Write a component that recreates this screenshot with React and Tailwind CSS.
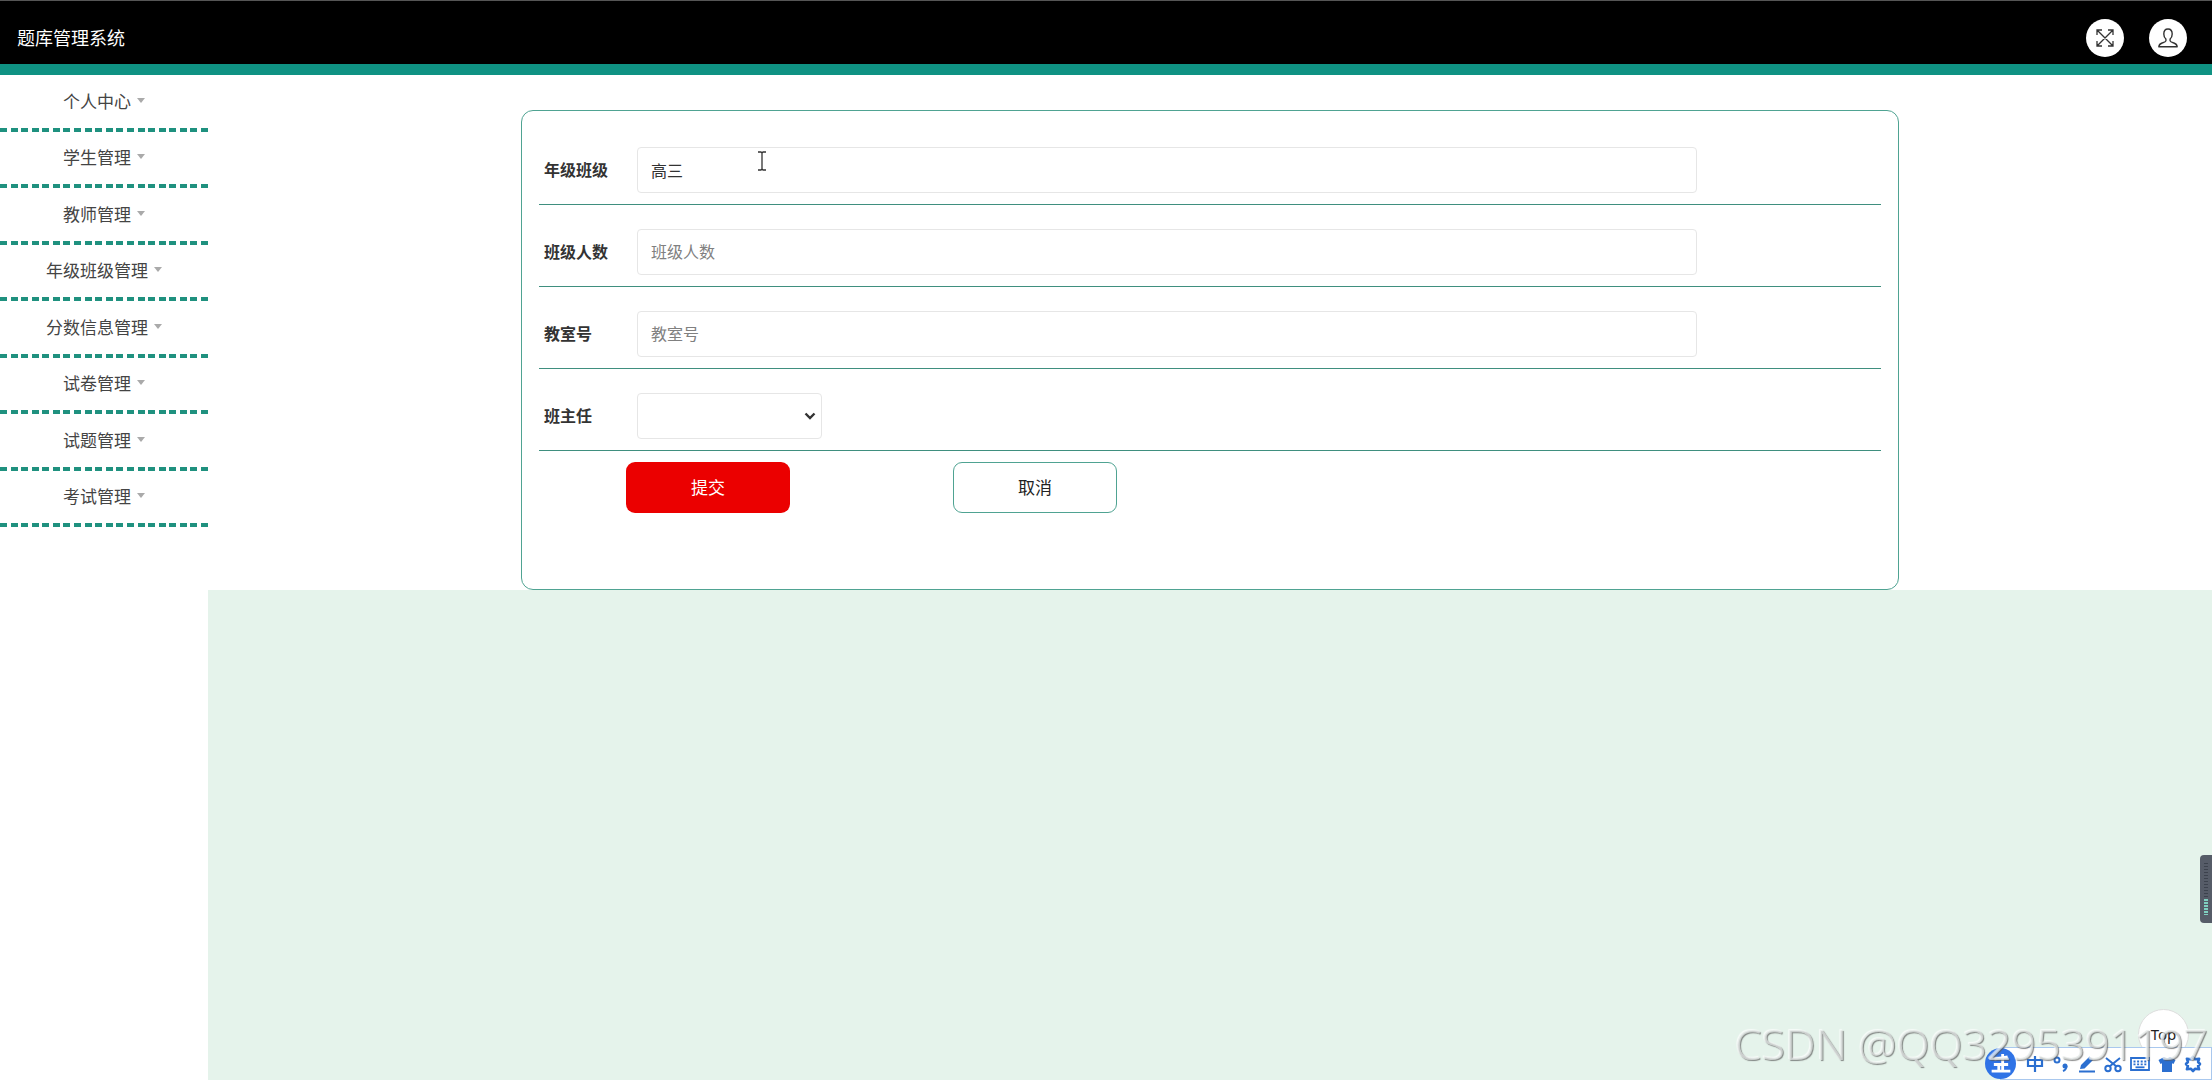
import { useState } from "react";

const menuItems = [
  "个人中心",
  "学生管理",
  "教师管理",
  "年级班级管理",
  "分数信息管理",
  "试卷管理",
  "试题管理",
  "考试管理",
];

const iconButton = "flex size-[38px] items-center justify-center rounded-full bg-white text-[#333]";
const control = "h-[46px] rounded-[4px] border border-[#e6e6e6] bg-white text-[16px] text-[#333] outline-none";

function Header() {
  return (
    <header className="flex h-[75px] items-center justify-between border-t border-b-[11px] border-t-[#555] border-b-[#0f9283] bg-black pt-[10px] pr-[25px] pl-[17px]">
      <h1 className="text-[18px] leading-6 text-white">题库管理系统</h1>
      <div className="flex gap-[25px]">
        <button type="button" aria-label="全屏" className={iconButton}>
          <svg viewBox="0 0 18 18" className="size-[18px]" fill="none" stroke="currentColor" strokeWidth="1.3">
            <path d="M1 1 17 17M17 1 1 17M1 6V1h5M12 1h5v5M17 12v5h-5M6 17H1v-5" />
          </svg>
        </button>
        <button type="button" aria-label="用户" className={iconButton}>
          <svg viewBox="0 0 20 20" className="size-5" fill="none" stroke="currentColor" strokeWidth="1.4" strokeLinejoin="round">
            <path d="M10 1C7.200 1 5.800 3.200 5.800 6c0 2.300.800 3.900 2.100 5v1.900c-.400 1.200-1.900 1.500-3.800 2.100-1.900.600-3 1.600-3.300 3.800h18.400c-.300-2.200-1.400-3.200-3.300-3.800-1.900-.600-3.400-.900-3.800-2.100V11c1.300-1.100 2.100-2.700 2.100-5 0-2.800-1.400-5-4.200-5Z" />
          </svg>
        </button>
      </div>
    </header>
  );
}

function Sidebar() {
  return (
    <nav className="w-[208px] shrink-0 bg-white">
      <ul className="grid h-[452px] auto-rows-fr">
        {menuItems.map((item) => (
          <li key={item} className="flex flex-col">
            <a href="#" className="flex flex-1 items-center justify-center gap-[6px] text-[17px] text-[#444]">
              {item}
              <span className="mb-[2px] border-x-4 border-t-[5px] border-x-transparent border-t-[#aaa]" />
            </a>
            <span className="h-[4px] bg-[repeating-linear-gradient(90deg,#1f917f_0_7px,transparent_7px_calc((100%_-_7px)/19))]" />
          </li>
        ))}
      </ul>
    </nav>
  );
}

function FormRow({ id, label, children }) {
  return (
    <div className="flex items-center border-b border-[#3f8f7f] pt-6 pr-[184px] pb-[11px] pl-[5px]">
      <label htmlFor={id} className="w-[93px] shrink-0 text-[16px] font-bold text-[#333]">
        {label}
      </label>
      {children}
    </div>
  );
}

function ClassForm() {
  const [form, setForm] = useState({ grade: "高三", count: "", room: "", teacher: "" });
  const update = (e) => setForm({ ...form, [e.target.name]: e.target.value });

  return (
    <form
      onSubmit={(e) => e.preventDefault()}
      className="mx-[313px] rounded-[12px] border border-[#4fa392] px-[17px] pt-[12px] pb-[76px]"
    >
      <FormRow id="grade" label="年级班级">
        <input id="grade" name="grade" value={form.grade} onChange={update} placeholder="年级班级" className={`${control} min-w-0 flex-1 px-[13px]`} />
      </FormRow>
      <FormRow id="count" label="班级人数">
        <input id="count" name="count" value={form.count} onChange={update} placeholder="班级人数" className={`${control} min-w-0 flex-1 px-[13px] placeholder:text-[#808080]`} />
      </FormRow>
      <FormRow id="room" label="教室号">
        <input id="room" name="room" value={form.room} onChange={update} placeholder="教室号" className={`${control} min-w-0 flex-1 px-[13px] placeholder:text-[#808080]`} />
      </FormRow>
      <FormRow id="teacher" label="班主任">
        <div className="relative w-[185px]">
          <select id="teacher" name="teacher" value={form.teacher} onChange={update} className={`${control} w-full appearance-none px-[13px]`}>
            <option value=""></option>
          </select>
          <svg viewBox="0 0 12 8" className="pointer-events-none absolute top-[19px] right-[6px] h-2 w-3" fill="none" stroke="#333" strokeWidth="2.400">
            <path d="m1.500 1.500 4.500 4.500 4.500-4.500" />
          </svg>
        </div>
      </FormRow>
      <div className="flex gap-[163px] pt-[11px] pl-[87px] text-[17px]">
        <button type="submit" className="h-[51px] w-[164px] rounded-[9px] bg-[#eb0000] text-white">
          提交
        </button>
        <button type="button" className="h-[51px] w-[164px] rounded-[9px] border border-[#4fa392] bg-white text-[#222]">
          取消
        </button>
      </div>
    </form>
  );
}

function InputToolbar() {
  return (
    <div className="fixed right-0 bottom-0 flex h-[33px] w-[212px] items-center gap-[8px] border border-[#a9c8ee] bg-white pl-[25px] text-[#2b6fd0]">
      <div className="absolute bottom-0 -left-[16px] flex size-[31px] items-center justify-center rounded-full bg-[#2f73e6]">
        <svg viewBox="0 0 20 20" className="size-[22px]" fill="none" stroke="white" strokeWidth="2.600">
          <path d="M4 5.500 16 3.500M3.500 10.500h13M1.500 16.500h17M8 10.500v6M11.500 1v15.500" />
        </svg>
      </div>
      <svg viewBox="0 0 18 18" className="size-[18px]" fill="none" stroke="currentColor" strokeWidth="2.200">
        <path d="M2 5h14v6H2zM9 1v16" />
      </svg>
      <svg viewBox="0 0 18 18" className="size-[18px]" fill="none" stroke="currentColor" strokeWidth="2">
        <circle cx="5" cy="5" r="2.500" />
        <circle cx="13" cy="11" r="2.500" fill="currentColor" stroke="none" />
        <path d="M14.500 11c0 2.500-1 4-3.500 5" />
      </svg>
      <svg viewBox="0 0 18 18" className="size-[18px]" fill="currentColor">
        <path d="m3 10 8.500-8.500L15 5l-8.500 8.500L2 14zM1 15.500h16v2H1z" />
      </svg>
      <svg viewBox="0 0 18 18" className="size-[18px]" fill="none" stroke="currentColor" strokeWidth="2">
        <circle cx="4" cy="13.500" r="2.700" />
        <circle cx="14" cy="13.500" r="2.700" />
        <path d="M2 3l10.500 8.500M16 3l-10.500 8.500" />
      </svg>
      <svg viewBox="0 0 20 18" className="h-[18px] w-5" fill="none" stroke="currentColor" strokeWidth="1.800">
        <path d="M1 3h18v12H1z" />
        <path d="M3.500 6.500h13M3.500 9.300h13" strokeDasharray="2 1.600" />
        <path d="M5.500 12.300h9" />
      </svg>
      <svg viewBox="0 0 18 18" className="size-[18px]" fill="currentColor">
        <path d="M6 2c1 1.500 5 1.500 6 0l5.500 3-2 4-1.500-.700V17H4V8.300L2.500 9l-2-4z" />
      </svg>
      <svg viewBox="0 0 18 18" className="size-[18px]" fill="none" stroke="currentColor" strokeWidth="2.600" strokeLinejoin="round">
        <path d="m9 2 2.200 2.300 3.900-.600-1 3.300L16 9l-1.900 2 1 3.300-3.900-.600L9 16l-2.200-2.300-3.900.600 1-3.300L2 9l1.900-2-1-3.300 3.900.600z" />
      </svg>
    </div>
  );
}

export default function App() {
  return (
    <div className="flex min-h-screen flex-col bg-white font-['Noto_Sans','Noto_Sans_CJK_SC',sans-serif]">
      <Header />
      <div className="flex flex-1">
        <Sidebar />
        <main className="flex-1 bg-[#e5f3eb]">
          <div className="bg-white pt-[35px]">
            <ClassForm />
          </div>
        </main>
      </div>

      {/* mouse pointer */}
      <svg viewBox="0 0 10 20" className="pointer-events-none fixed top-[151px] left-[757px] h-5 w-[10px]" fill="none" stroke="#333" strokeWidth="1.300">
        <path d="M1 1h3l1 1 1-1h3M5 2v16M1 19h3l1-1 1 1h3" />
      </svg>

      {/* volume gauge on the screen edge */}
      <div className="fixed top-[855px] right-0 h-[68px] w-3 rounded-l-[4px] bg-[#565c68] px-[4px] pt-2">
        <div className="h-9 bg-[repeating-linear-gradient(#3c424d_0_1px,transparent_1px_3px)]" />
        <div className="h-4 bg-[repeating-linear-gradient(#7fd0c0_0_2px,transparent_2px_3px)]" />
      </div>

      <button type="button" className="fixed right-[23px] bottom-[20px] size-[51px] rounded-full border border-[#ddd] bg-white text-[15px] text-[#222]">
        Top
      </button>
      <InputToolbar />
      <div className="pointer-events-none fixed right-[4px] bottom-[7px] text-[43px] leading-[58px] font-light whitespace-nowrap text-[#e6eae8]/70 [text-shadow:1px_1px_1px_rgba(90,90,90,0.7),-1px_-1px_1px_rgba(255,255,255,0.7)]">
        CSDN @QQ3295391197
      </div>
    </div>
  );
}
